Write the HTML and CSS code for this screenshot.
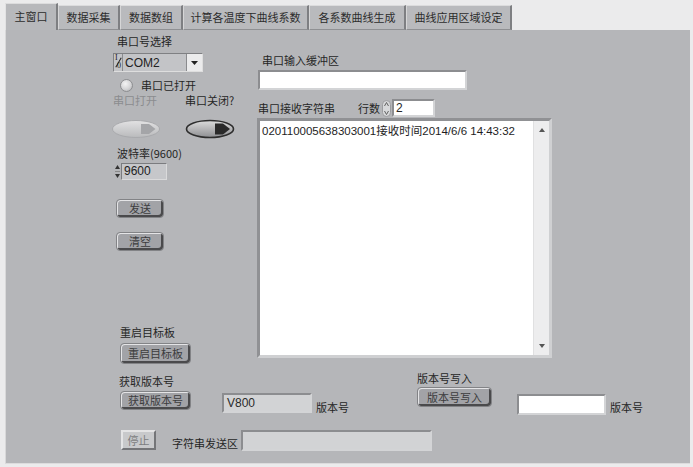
FILE: index.html
```html
<!DOCTYPE html>
<html lang="zh-CN">
<head>
<meta charset="utf-8">
<title>主窗口</title>
<link rel="stylesheet" href="styles.css">
</head>
<body>
<div class="window">
  <div class="tabs">
    <div class="tab active t1">主窗口</div>
    <div class="tab t2">数据采集</div>
    <div class="tab t3">数据数组</div>
    <div class="tab t4">计算各温度下曲线系数</div>
    <div class="tab t5">各系数曲线生成</div>
    <div class="tab t6">曲线应用区域设定</div>
  </div>
  <div class="panel">
    <div class="upper">
      <div class="left-col">
        <div class="lbl l-port">串口号选择</div>
        <div class="combo">
          <span class="io"><span class="io-i">I</span><span class="io-s"></span><span class="io-o">0</span></span>
          <span class="combo-text">COM2</span>
          <span class="combo-btn"><svg width="7" height="4" viewBox="0 0 7 4"><path d="M0 0H7L3.5 4Z" fill="#222"/></svg></span>
        </div>
        <div class="led-row">
          <span class="led"></span>
          <span class="lbl">串口已打开</span>
        </div>
        <div class="toggle-labels">
          <span class="lbl disabled">串口打开</span>
          <span class="lbl">串口关闭?</span>
        </div>
        <div class="toggles">
          <svg class="tog" width="50" height="20" viewBox="0 0 50 20">
            <defs>
              <linearGradient id="g1" x1="0" y1="0" x2="0" y2="1">
                <stop offset="0" stop-color="#e2e2e3"/>
                <stop offset="1" stop-color="#b9babc"/>
              </linearGradient>
              <linearGradient id="g2" x1="0" y1="0" x2="0" y2="1">
                <stop offset="0" stop-color="#dcdcdc"/>
                <stop offset="1" stop-color="#8e8f92"/>
              </linearGradient>
            </defs>
            <ellipse cx="25" cy="10" rx="23.5" ry="8.5" fill="url(#g1)" stroke="#a9aaad" stroke-width="1"/>
            <path d="M30 5H38L44.5 10L38 15H30Z" fill="#a4a5a8"/>
          </svg>
          <svg class="tog tog2" width="50" height="20" viewBox="0 0 50 20">
            <ellipse cx="25" cy="10" rx="23.5" ry="8.5" fill="url(#g2)" stroke="#2e2e2e" stroke-width="1.6"/>
            <path d="M30 4.5H38L45 10L38 15.5H30Z" fill="#2a2a2a"/>
          </svg>
        </div>
        <div class="lbl l-baud">波特率(9600)</div>
        <div class="numeric">
          <span class="arrows"><svg width="5" height="15" viewBox="0 0 5 15"><path d="M0 5H5L2.5 1Z" fill="#333"/><path d="M0 10H5L2.5 14Z" fill="#333"/><path d="M0 7.5H5" stroke="#888" stroke-width="1"/></svg></span>
          <span class="num-box">9600</span>
        </div>
        <div class="btn b-send">发送</div>
        <div class="btn b-clear">清空</div>
        <div class="lbl l-reboot">重启目标板</div>
        <div class="btn b-reboot">重启目标板</div>
      </div>
      <div class="right-col">
        <div class="lbl l-buf">串口输入缓冲区</div>
        <div class="field white f-buf"></div>
        <div class="recv-row">
          <span class="lbl">串口接收字符串</span>
          <span class="lbl l-rows">行数</span>
          <span class="spin"><svg width="9" height="17" viewBox="0 0 9 17"><rect x="0.5" y="0.5" width="8" height="16" rx="4" fill="#d7d8da" stroke="#9c9da0"/><path d="M2.5 6L4.5 2.5L6.5 6" fill="none" stroke="#555" stroke-width="0.9"/><path d="M2.5 11L4.5 14.5L6.5 11" fill="none" stroke="#555" stroke-width="0.9"/></svg></span>
          <span class="field white f-rows">2</span>
        </div>
        <div class="textarea">
          <div class="ta-text">020110005638303001接收时间2014/6/6 14:43:32</div>
          <div class="scrollbar">
            <svg width="6" height="4" viewBox="0 0 6 4"><path d="M0 4H6L3 0Z" fill="#555"/></svg>
            <svg width="6" height="4" viewBox="0 0 6 4"><path d="M0 0H6L3 4Z" fill="#555"/></svg>
          </div>
        </div>
      </div>
    </div>
    <div class="version">
      <div class="ver-get">
        <div class="lbl l-get">获取版本号</div>
        <div class="ver-row">
          <div class="btn b-get">获取版本号</div>
          <div class="field grey f-v800">V800</div>
          <span class="lbl l-vn">版本号</span>
        </div>
      </div>
      <div class="ver-set">
        <div class="lbl">版本号写入</div>
        <div class="ver-row">
          <div class="btn b-set">版本号写入</div>
          <div class="field white f-vset"></div>
          <span class="lbl l-vn2">版本号</span>
        </div>
      </div>
    </div>
    <div class="send-row">
      <div class="stop">停止</div>
      <span class="lbl l-sendarea">字符串发送区</span>
      <div class="field grey f-send"></div>
    </div>
  </div>
</div>
</body>
</html>
```

FILE: styles.css
```css
* { box-sizing: border-box; }
html, body { margin: 0; padding: 0; }
body {
  width: 693px;
  height: 467px;
  background: #ebebec;
  font-family: "Noto Sans CJK SC", "Noto Sans", sans-serif;
  font-size: 11px;
  color: #262626;
  overflow: hidden;
}
.window { padding: 4px 3px 0 5px; }

.tabs { display: flex; height: 26px; align-items: flex-end; }
.tab {
  height: 25px;
  line-height: 23px;
  text-align: center;
  background: #b9babd;
  border-top: 1px solid #dcdcdd;
  border-left: 1px solid #d6d6d7;
  border-right: 2px solid #7e7f82;
  border-bottom: 1px solid #8f9093;
  color: #2c2c2c;
  white-space: nowrap;
}
.tab.active {
  height: 27px;
  background: #b7b8bb;
  border-bottom: none;
  border-left: 1px solid #e2e2e3;
  line-height: 24px;
  position: relative;
  z-index: 1;
}
.t1 { width: 53px; }
.t2 { width: 62px; }
.t3 { width: 63px; }
.t4 { width: 126px; }
.t5 { width: 97px; }
.t6 { width: 106px; }

.panel {
  width: 685px;
  height: 434px;
  background: #b5b6b9;
  border-left: 1px solid #d8d8d9;
  border-bottom: 1px solid #dcdcdd;
  padding-left: 106px;
}

.lbl { line-height: 14px; height: 14px; white-space: nowrap; display: block; }
.lbl.disabled { color: #8b8c8f; }

.upper { display: flex; height: 333px; }
.left-col { width: 145px; }
.right-col { width: 300px; }

.l-port { margin: 4px 0 0 5px; }
.combo {
  margin: 5px 0 0 1px;
  width: 90px;
  height: 19px;
  display: flex;
  align-items: center;
  background: #c3c4c7;
  border: 1px solid;
  border-color: #7f8083 #dedede #dedede #7f8083;
}
.io {
  position: relative;
  width: 9px;
  height: 17px;
  font-family: "Liberation Serif", serif;
  font-size: 8px;
  line-height: 8px;
  color: #222;
  border-right: 1px solid #8a8b8e;
  flex: none;
}
.io-i { position: absolute; left: 1px; top: 0; }
.io-o { position: absolute; left: 3px; top: 8px; }
.io-s { position: absolute; left: 4px; top: 3px; width: 1px; height: 11px; background: #222; transform: rotate(30deg); }
.combo-text {
  flex: 1;
  padding-left: 2px;
  font-family: "Liberation Sans", sans-serif;
  font-size: 12px;
  color: #222;
}
.combo-btn {
  width: 16px;
  height: 17px;
  display: flex;
  align-items: center;
  justify-content: center;
  background: #ebebec;
  border-left: 1px solid #8a8b8e;
}

.led-row { display: flex; align-items: center; margin: 6px 0 0 8px; height: 14px; gap: 8px; }
.led {
  width: 13px; height: 13px;
  border-radius: 50%;
  background: radial-gradient(circle at 40% 35%, #f4f4f4 0, #d4d4d6 55%, #a9aaad 100%);
  border: 1px solid #8d8e91;
}
.toggle-labels { display: flex; margin: 1px 0 0 1px; gap: 28px; }
.toggles { display: flex; margin: 12px 0 0 -1px; gap: 24px; }
.tog { display: block; }

.l-baud { margin: 7px 0 0 5px; }
.numeric { display: flex; align-items: center; margin: 3px 0 0 3px; height: 16px; }
.arrows { width: 6px; display: flex; align-items: center; }
.num-box {
  width: 46px;
  height: 17px;
  padding-left: 2px;
  line-height: 15px;
  font-family: "Liberation Sans", sans-serif;
  font-size: 12px;
  background: #c6c7ca;
  border: 1px solid;
  border-color: #7b7c7f #dadadb #dadadb #7b7c7f;
  color: #222;
}

.btn {
  height: 19px;
  line-height: 17px;
  text-align: center;
  background: #a2a3a7;
  color: #3c3c3e;
  border-radius: 4px;
  border: 1px solid #828386;
  box-shadow: inset 1px 1px 0 #e4e4e6, inset -2px -2px 0 #4a4a4c;
  white-space: nowrap;
}
.b-send { width: 48px; margin: 20px 0 0 4px; }
.b-clear { width: 48px; margin: 14px 0 0 4px; }
.l-reboot { margin: 74px 0 0 8px; }
.b-reboot { width: 71px; height: 21px; line-height: 19px; margin: 4px 0 0 8px; }

.l-buf { margin: 23px 0 0 5px; }
.field {
  border: 2px solid;
  border-color: #8c8d90 #d3d4d6 #d3d4d6 #8c8d90;
}
.field.white { background: #ffffff; }
.field.grey { background: #d2d3d5; }
.f-buf { width: 209px; height: 20px; margin: 3px 0 0 1px; }

.recv-row { display: flex; align-items: center; height: 18px; margin: 9px 0 0 1px; }
.l-rows { margin-left: 23px; }
.spin { display: flex; margin-left: 2px; }
.f-rows {
  width: 43px;
  height: 18px;
  margin-left: 1px;
  padding-left: 2px;
  line-height: 14px;
  font-family: "Liberation Sans", sans-serif;
  font-size: 12px;
}

.textarea {
  margin-top: 1px;
  width: 295px;
  height: 240px;
  display: flex;
  background: #ffffff;
  border: 3px solid;
  border-color: #909194 #cfd0d2 #cfd0d2 #909194;
}
.ta-text {
  flex: 1;
  padding: 3px 0 0 2px;
  font-family: "Liberation Sans", "Noto Sans CJK SC", sans-serif;
  font-size: 11.5px;
  line-height: 14px;
  color: #1e1e1e;
}
.scrollbar {
  width: 16px;
  background: #ededee;
  border-left: 1px solid #e0e0e1;
  display: flex;
  flex-direction: column;
  justify-content: space-between;
  align-items: center;
  padding: 7px 0 7px;
}

.version { display: flex; margin-top: 8px; height: 58px; }
.ver-get { width: 305px; padding-top: 3px; }
.l-get { margin-left: 7px; }
.ver-row { display: flex; align-items: flex-start; }
.b-get { width: 71px; margin: 3px 0 0 8px; }
.f-v800 {
  width: 90px;
  height: 20px;
  margin: 5px 0 0 31px;
  padding-left: 3px;
  line-height: 16px;
  font-family: "Liberation Sans", sans-serif;
  font-size: 12px;
  color: #2a2a2a;
}
.l-vn { margin: 12px 0 0 4px; }
.ver-set { padding-top: 0; }
.b-set { width: 75px; height: 20px; line-height: 18px; margin-top: 2px; }
.f-vset { width: 89px; height: 21px; margin: 9px 0 0 25px; }
.l-vn2 { margin: 15px 0 0 4px; }

.send-row { display: flex; align-items: center; margin-top: 0; height: 22px; }
.stop {
  width: 35px;
  height: 20px;
  margin-left: 9px;
  line-height: 16px;
  text-align: center;
  color: #7c7d80;
  background: #c8c9cb;
  border: 2px solid;
  border-color: #e4e4e5 #747578 #747578 #e4e4e5;
}
.l-sendarea { margin: 5px 0 0 16px; }
.f-send { width: 191px; height: 21px; margin-left: 3px; }
```
